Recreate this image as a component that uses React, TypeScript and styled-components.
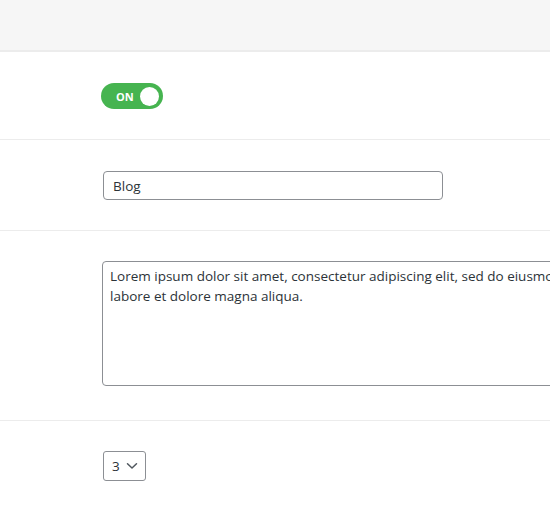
import { createGlobalStyle, styled } from "styled-components";

const GlobalStyle = createGlobalStyle`
  html, body {
    margin: 0;
    padding: 0;
    background: #fff;
    overflow: hidden;
  }
  body {
    font-family: "Open Sans", "Liberation Sans", sans-serif;
    font-size: 13.5px;
    color: #2c3338;
  }
`;

const Page = styled.div`
  width: 550px;
  height: 509px;
  overflow: hidden;
`;

const Header = styled.div`
  height: 50px;
  background: #f6f6f6;
  border-bottom: 2px solid #ececec;
`;

const Row = styled.div<{ $top: number; $bottom: number }>`
  display: grid;
  grid-template-columns: 103px 1fr;
  padding: ${(p) => p.$top}px 0 ${(p) => p.$bottom}px;
  border-bottom: 1px solid #ececec;

  &:last-child {
    border-bottom: none;
  }
`;

const Label = styled.div``;

const Field = styled.div`
  display: flex;
  align-items: flex-start;
  min-width: 0;
`;

const Toggle = styled.button`
  width: 62px;
  height: 26px;
  margin-left: -2px;
  border: none;
  border-radius: 13px;
  background: #46b450;
  display: flex;
  align-items: center;
  justify-content: space-between;
  padding: 0 4px 0 15px;
  color: #fff;
  font-family: "Open Sans", "Liberation Sans", sans-serif;
  font-size: 11px;
  font-weight: 700;
  cursor: pointer;
`;

const Knob = styled.span`
  width: 19px;
  height: 19px;
  border-radius: 50%;
  background: #fff;
`;

const TextInput = styled.input`
  box-sizing: border-box;
  width: 340px;
  height: 29px;
  padding: 0 9px;
  border: 1px solid #8c8f94;
  border-radius: 4px;
  font-family: inherit;
  font-size: 13.5px;
  color: #2c3338;
  outline: none;
`;

const TextArea = styled.textarea`
  box-sizing: border-box;
  flex: none;
  width: 606px;
  height: 125px;
  margin-left: -1px;
  padding: 4px 7px;
  border: 1px solid #8c8f94;
  border-radius: 4px;
  font-family: inherit;
  font-size: 13.5px;
  line-height: 20px;
  color: #2c3338;
  resize: none;
  outline: none;
`;

const SelectBox = styled.div`
  box-sizing: border-box;
  width: 43px;
  height: 30px;
  display: flex;
  align-items: center;
  gap: 6px;
  padding: 0 0 0 8px;
  border: 1px solid #8c8f94;
  border-radius: 3px;
  font-size: 13.5px;
  color: #2c3338;
`;

const Chevron = () => (
  <svg width="12" height="8" viewBox="0 0 12 8" fill="none">
    <polyline
      points="1.5,1.8 6,6 10.5,1.8"
      stroke="#50575e"
      strokeWidth="1.5"
      strokeLinecap="round"
      strokeLinejoin="round"
    />
  </svg>
);

export default function App() {
  return (
    <Page>
      <GlobalStyle />
      <Header />
      <Row $top={31} $bottom={30}>
        <Label />
        <Field>
          <Toggle type="button">
            ON
            <Knob />
          </Toggle>
        </Field>
      </Row>
      <Row $top={31} $bottom={30}>
        <Label />
        <Field>
          <TextInput defaultValue="Blog" />
        </Field>
      </Row>
      <Row $top={30} $bottom={34}>
        <Label />
        <Field>
          <TextArea defaultValue="Lorem ipsum dolor sit amet, consectetur adipiscing elit, sed do eiusmod tempor incididunt ut labore et dolore magna aliqua." />
        </Field>
      </Row>
      <Row $top={30} $bottom={30}>
        <Label />
        <Field>
          <SelectBox>
            3
            <Chevron />
          </SelectBox>
        </Field>
      </Row>
    </Page>
  );
}
